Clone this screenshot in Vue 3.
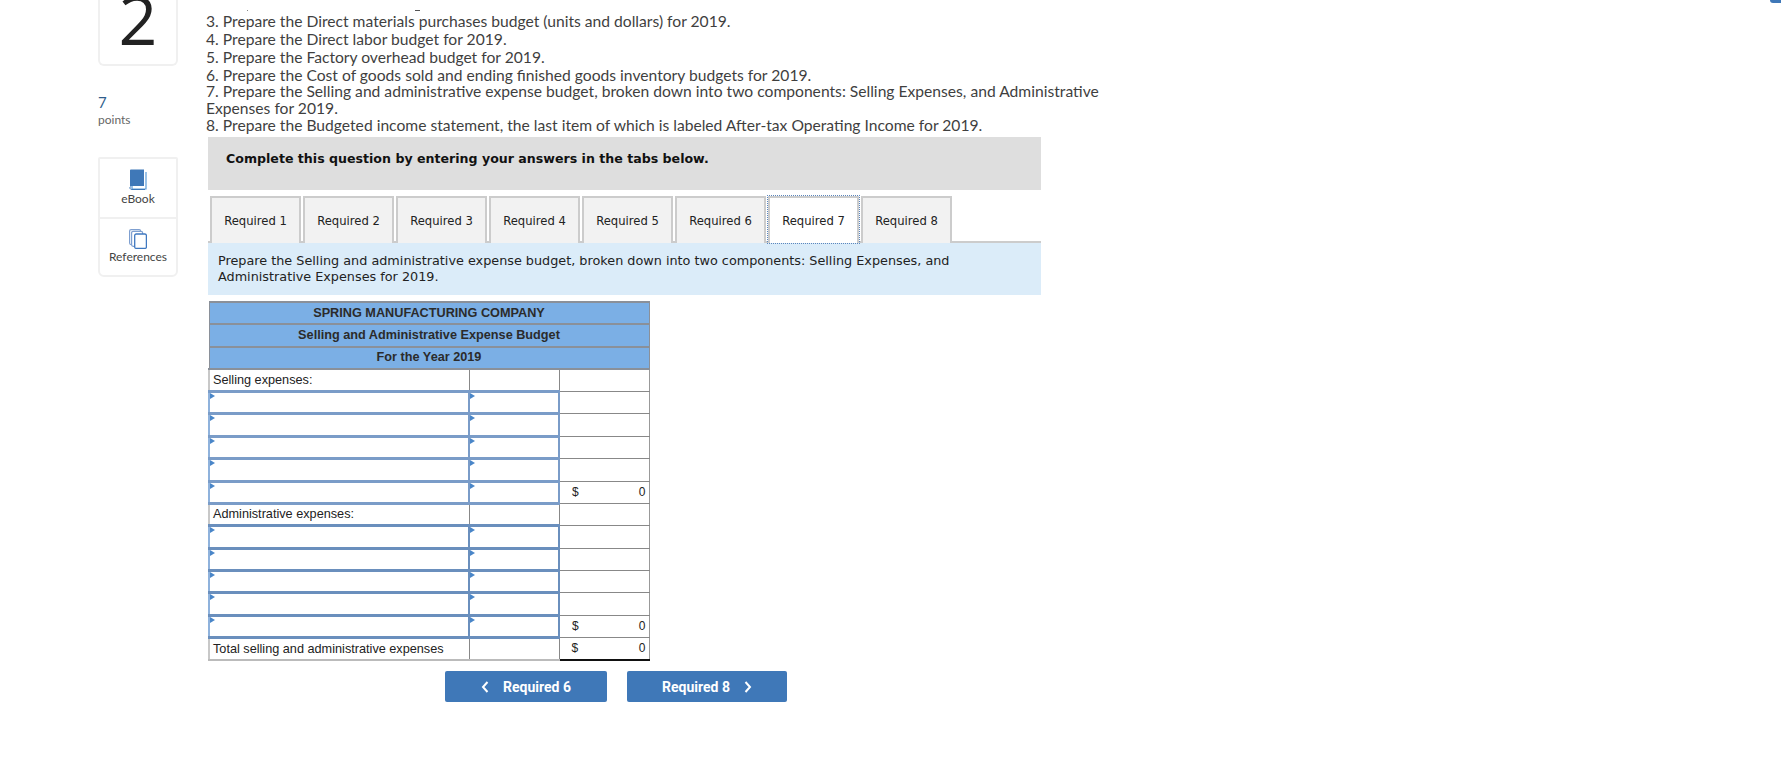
<script setup>
const lines = [
  { text: '3. Prepare the Direct materials purchases budget (units and dollars) for 2019.', cls: 'l3' },
  { text: '4. Prepare the Direct labor budget for 2019.', cls: 'l5' },
  { text: '5. Prepare the Factory overhead budget for 2019.', cls: 'l5' },
  { text: '6. Prepare the Cost of goods sold and ending finished goods inventory budgets for 2019.', cls: 'l5' },
  { text: '7. Prepare the Selling and administrative expense budget, broken down into two components: Selling Expenses, and Administrative', cls: 'l7' },
  { text: 'Expenses for 2019.', cls: 'l4' },
  { text: '8. Prepare the Budgeted income statement, the last item of which is labeled After-tax Operating Income for 2019.', cls: 'l4' }
]
const tabs = [1, 2, 3, 4, 5, 6, 7, 8]
const heads = ['SPRING MANUFACTURING COMPANY', 'Selling and Administrative Expense Budget', 'For the Year 2019']
const sections = [
  { label: 'Selling expenses:', cls: 'sel' },
  { label: 'Administrative expenses:', cls: 'adm' }
]
</script>

<template>
  <div class="page">
    <div class="topmark"></div>
    <aside class="side">
      <div class="num"><span>2</span></div>
      <div class="worth">
        <div class="seven">7</div>
        <div class="pts">points</div>
      </div>
      <div class="tools">
        <div class="tool">
          <svg width="18" height="21" viewBox="0 0 18 21">
            <path d="M3 3V20H17V3" fill="#fff" stroke="#5b9bd8" stroke-width="1.2"/>
            <path d="M1 1.5C1 .8 1.5.5 2 .5H15V17H3C1.800 17 1 17.600 1 18.500Z" fill="#3f78b8"/>
            <path d="M1 18V19C1 20 1.800 20.500 3 20.500H16" fill="none" stroke="#3f78b8" stroke-width="1"/>
          </svg>
          <span>eBook</span>
        </div>
        <div class="tool div">
          <svg width="18" height="20" viewBox="0 0 18 20">
            <rect x=".6" y=".6" width="11" height="15" rx="1.500" fill="#fff" stroke="#7e9fd0" stroke-width="1.200"/>
            <rect x="2.600" y="2.300" width="11" height="15" rx="1.500" fill="#fff" stroke="#7e9fd0" stroke-width="1.200"/>
            <rect x="5.700" y="5" width="11.700" height="14.400" rx="1.500" fill="#fff" stroke="#3f78c0" stroke-width="1.300"/>
          </svg>
          <span>References</span>
        </div>
      </div>
    </aside>

    <main class="main">
      <div class="marks"><i></i><i class="m2"></i></div>
      <div class="question">
        <div v-for="l in lines" :key="l.text" :class="['qline', l.cls]">{{ l.text }}</div>
      </div>

      <div class="content">
        <div class="prompt">Complete this question by entering your answers in the tabs below.</div>

        <div class="tabs">
          <div v-for="t in tabs" :key="t" :class="['tab', { active: t === 7 }]">Required {{ t }}</div>
        </div>

        <div class="instr">
          Prepare the Selling and administrative expense budget, broken down into two components: Selling Expenses, and<br>
          Administrative Expenses for 2019.
        </div>

        <table class="sheet">
          <colgroup><col class="c1"><col class="c2"><col class="c3"></colgroup>
          <tbody>
            <tr v-for="h in heads" :key="h" class="head"><td colspan="3">{{ h }}</td></tr>
            <template v-for="s in sections" :key="s.label">
              <tr class="row">
                <td class="lbl">{{ s.label }}</td><td></td><td></td>
              </tr>
              <tr v-for="n in 5" :key="n" :class="['row', s.cls]">
                <td class="inp"><b class="tri"></b></td>
                <td class="inp"><b class="tri"></b></td>
                <td :class="{ amt: n === 5 }">
                  <div v-if="n === 5" class="money"><span>$</span><span>0</span></div>
                </td>
              </tr>
            </template>
            <tr class="row total">
              <td class="lbl">Total selling and administrative expenses</td>
              <td></td>
              <td class="grand"><div class="money"><span>$</span><span>0</span></div></td>
            </tr>
          </tbody>
        </table>

        <div class="nav">
          <button class="btn prev">
            <svg width="8" height="12" viewBox="0 0 8 12"><path d="M6.500 1 2 6l4.500 5" fill="none" stroke="#fff" stroke-width="2"/></svg>
            <span>Required 6</span>
          </button>
          <button class="btn next">
            <span>Required 8</span>
            <svg width="8" height="12" viewBox="0 0 8 12"><path d="M1.500 1 6 6l-4.500 5" fill="none" stroke="#fff" stroke-width="2"/></svg>
          </button>
        </div>
      </div>
    </main>
  </div>
</template>

<style>
html, body { margin: 0; background: #fff; }
</style>

<style scoped>
.page {
  position: relative;
  display: flex;
  align-items: flex-start;
  width: 1781px;
  height: 760px;
  padding-left: 98px;
  box-sizing: border-box;
  overflow: hidden;
  background: #fff;
  color: #333;
  font-family: Lato, "Open Sans", sans-serif;
}
.topmark {
  position: absolute;
  top: -8px;
  right: -10px;
  width: 21px;
  height: 11px;
  background: #3f78b8;
  border-radius: 3px;
}

.side { width: 80px; flex: none; }
.num {
  height: 66px;
  box-sizing: border-box;
  border: 2px solid #f0f0f0;
  border-top: 0;
  border-radius: 0 0 6px 6px;
  overflow: hidden;
  text-align: center;
  color: #222;
  font-family: "Open Sans", sans-serif;
  font-weight: 400;
  font-size: 68px;
  line-height: 44px;
}
.num span { display: block; margin-top: -3px; }
.worth { margin-top: 27px; }
.seven { font-size: 15px; line-height: 18px; color: #2f5d8c; }
.pts { font-size: 12px; line-height: 18px; color: #666; }
.tools {
  margin-top: 28px;
  height: 120px;
  box-sizing: border-box;
  border: 2px solid #f0f0f0;
  border-radius: 2px 2px 6px 6px;
}
.tool {
  height: 58px;
  box-sizing: border-box;
  padding-top: 10px;
  display: flex;
  flex-direction: column;
  align-items: center;
  font-size: 12px;
  line-height: 14px;
  color: #444;
}
.tool svg { display: block; margin-bottom: 2px; }
.tool.div { height: 60px; border-top: 2px solid #f0f0f0; padding-top: 10px; }
.tool.div svg { margin-bottom: 1px; }

.main { position: relative; margin-left: 28px; width: 840px; flex: none; }
.marks i {
  position: absolute;
  left: 41px;
  top: 10px;
  width: 1px;
  height: 1px;
  background: #888;
}
.marks i.m2 { left: 209px; width: 5px; background: #555; }
.question { padding-top: 13px; white-space: nowrap; }
.qline {
  font-size: 15.650px;
  line-height: 17px;
  color: #3f3f3f;
}
.qline.l5 { margin-top: 1px; }
.qline.l7 { margin-top: -1px; }
.content { margin-left: 2px; margin-top: 3px; width: 833px; }
.prompt {
  height: 53px;
  box-sizing: border-box;
  padding: 14px 18px 0;
  background: #dedede;
  color: #111;
  font-family: "DejaVu Sans", sans-serif;
  font-weight: 700;
  font-size: 12.600px;
  line-height: 16px;
}
.tabs {
  display: flex;
  gap: 2px;
  height: 47px;
  margin-top: 6px;
  padding-left: 2px;
  box-sizing: border-box;
  border-bottom: 2px solid #ccc;
}
.tab {
  width: 91px;
  height: 47px;
  box-sizing: border-box;
  border: 2px solid #ccc;
  border-bottom: 0;
  background: #f2f2f2;
  display: flex;
  align-items: center;
  justify-content: center;
  font-family: "DejaVu Sans", sans-serif;
  font-size: 11.600px;
  color: #222;
}
.tab.active {
  background: #fff;
  outline: 1px dotted #5b86bd;
  outline-offset: 0;
}
.instr {
  height: 52px;
  box-sizing: border-box;
  padding: 10px 10px 0;
  background: #dbecf9;
  color: #222;
  font-family: "DejaVu Sans", sans-serif;
  font-size: 12.800px;
  line-height: 16px;
  white-space: nowrap;
}

.sheet {
  margin-top: 6px;
  width: 440px;
  table-layout: fixed;
  border-collapse: collapse;
  font-family: "Liberation Sans", Arial, sans-serif;
  font-size: 12.700px;
  color: #222;
}
.c1 { width: 260px; }
.c2 { width: 90px; }
.c3 { width: 90px; }
.sheet td {
  padding: 0 0 1px;
  border: 1px solid #888;
  position: relative;
  height: 22.380px;
  box-sizing: border-box;
}
.sheet tr > td:first-child { border-left: 2px solid #c8c8c8; }
.sheet tr > td:last-child { border-right: 1px solid #999; }
.head td {
  background: #7bafe5;
  text-align: center;
  font-weight: 700;
  color: #2b2b2b;
  border-top: 2px solid #8a9099;
  border-bottom: 2px solid #8a9099;
}
.sheet tr.head > td { border-left: 1px solid #8a9099; border-right: 1px solid #8a9099; }
.lbl { padding-left: 3px !important; }
.sheet .inp {
  border: 3px solid #7a9cc8;
  border-left-width: 2px;
  border-right-width: 2px;
  background: #fff;
}
.sheet .adm .inp { border-color: #6a8fbd; }
.sheet tr > td.inp:first-child { border-left: 2px solid #8fb2dc; }
.tri {
  position: absolute;
  left: 0;
  top: 0;
  width: 0;
  height: 0;
  border-left: 5px solid #4a86c8;
  border-top: 3px solid transparent;
  border-bottom: 3px solid transparent;
}
.money {
  display: flex;
  justify-content: space-between;
  padding: 0 3px 0 12px;
  font-size: 12px;
}
.sheet .grand { border-bottom: 2px solid #111; }
.sheet .total td:not(.grand) { border-bottom: 2px solid #bbb; }

.nav {
  display: flex;
  gap: 20px;
  margin-top: 10px;
  margin-left: 237px;
}
.btn {
  width: 162px;
  height: 31px;
  display: flex;
  align-items: center;
  justify-content: center;
  gap: 14px;
  border: 0;
  border-radius: 2px;
  padding: 0;
  background: #3f78b8;
  color: #fff;
  font-family: Roboto, sans-serif;
  font-weight: 700;
  font-size: 14px;
}
.btn.next { width: 160px; gap: 14px; }
</style>
